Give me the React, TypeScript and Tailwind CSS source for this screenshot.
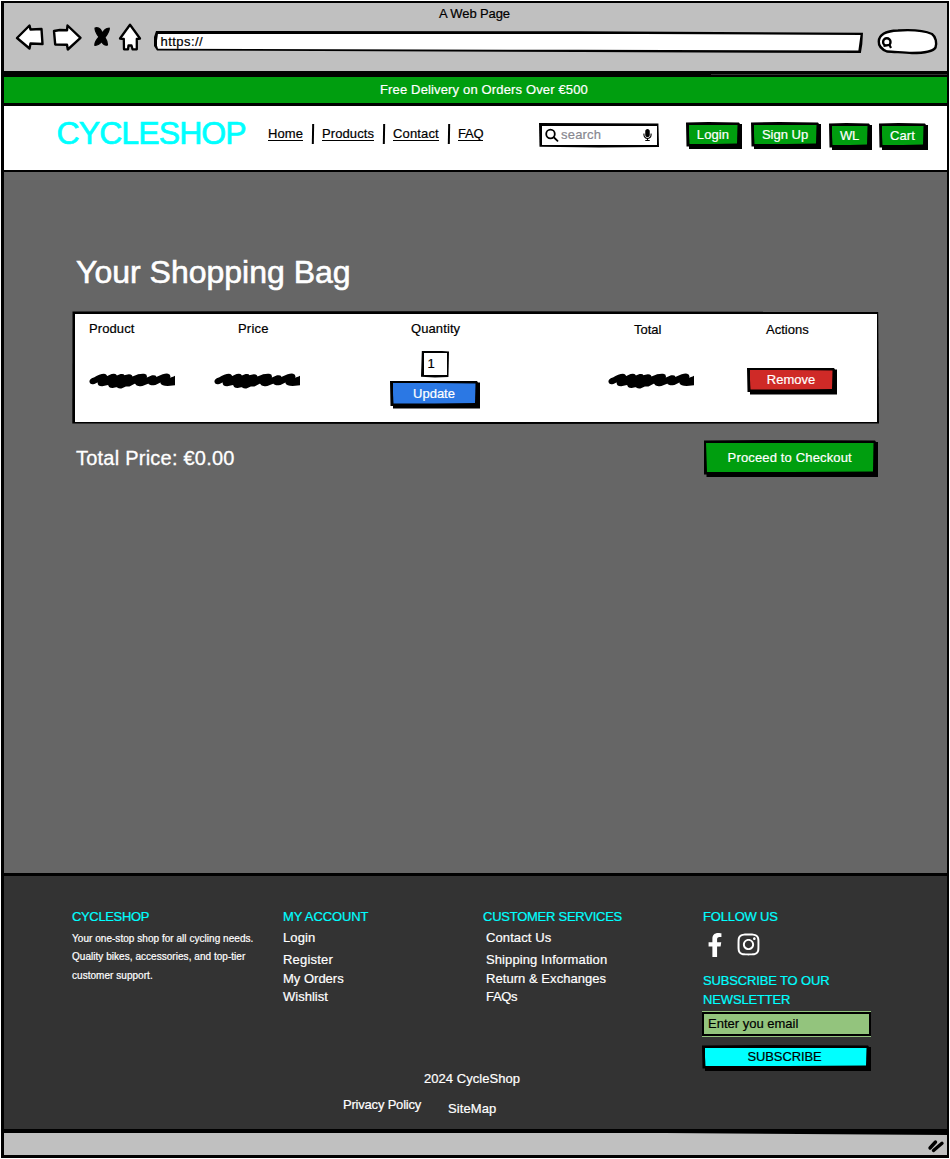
import React from 'react';
import { FaFacebookF, FaInstagram, FaMicrophone } from 'react-icons/fa';

type SketchButtonProps = {
  label: string;
  className: string;
  face: string;
  text?: string;
};

function SketchButton({ label, className, face, text = 'text-white' }: SketchButtonProps) {
  return (
    <button
      className={`shrink-0 bg-black pt-[2.5px] pr-[4.5px] pb-[5px] pl-[2.5px] [clip-path:polygon(0_0.5px,40%_0,calc(100%-3px)_0.5px,calc(100%-2px)_2px,100%_2px,100%_100%,3px_100%,3px_calc(100%-2.5px),0.5px_calc(100%-2.5px))] ${className}`}
    >
      <span
        className={`flex h-full w-full items-center justify-center whitespace-nowrap [clip-path:polygon(0_0,50%_0,100%_0.5px,calc(100%-0.5px)_calc(100%-0.5px),50%_100%,1px_100%)] ${face} ${text}`}
      >
        {label}
      </span>
    </button>
  );
}

function Scribble() {
  return (
    <svg className="block h-[18px] w-[86px]" viewBox="89 371 86 18" fill="#000" stroke="#000" strokeWidth="2" strokeLinejoin="round">
      <path d="M90.5 382 Q90 380 94 378.5 Q100 375 104 374.8 Q107 375 105.5 378 L112 375 Q116 374 116 377 L121 375 Q124 374.5 123 376.5 L129 375.2 Q132 375.2 131.5 378 L138 375.3 Q146 373.8 146 376.5 L145 379.5 L152 376.3 Q156 375.5 155.5 378.5 L163 375.2 Q169.5 373.5 169.5 376.8 L167.5 380 L173 377.8 L178 375.5 L178 384 L170 384.8 Q162.5 385.3 161.5 383 L162 380.5 L155 384 Q149.5 385 149 382.2 L142 385 Q137 386 136 383.5 L136.5 381.5 L129 385.5 L126 385.3 L121 387.5 Q118.5 388 117 386 L112.5 387 Q109 387 109 383.8 L102 385.3 Q98 385.3 98.8 382 L99.5 380.3 L94 383 Q91 383.8 90.5 382 Z" />
    </svg>
  );
}

function Divider() {
  return <span className="h-5 w-[2px] shrink-0 -skew-x-1 bg-black" />;
}

function BrowserBar() {
  return (
    <div className="h-[68px] bg-[#c0c0c0]">
      <div className="pt-px pr-[2px] text-center leading-[19px] tracking-[-0.1px]">A Web Page</div>
      <div className="flex items-start">
        <svg className="ml-[10px] h-[31px] w-8 shrink-0" viewBox="14 23 32 31" fill="#fff" stroke="#000" strokeWidth="2.4" strokeLinejoin="round">
          <path d="M17 38 L29.5 25.5 L30.5 29.5 L41.5 29 L42.5 44 L30.5 43.5 L29.5 48.5 Z" />
        </svg>
        <svg className="ml-[5px] h-[31px] w-8 shrink-0" viewBox="51 23 32 31" fill="#fff" stroke="#000" strokeWidth="2.4" strokeLinejoin="round">
          <path d="M54 31 L60 30 L67 30.3 L67.5 25.5 L80.5 37.8 L67.8 49.5 L67 44.8 L55.2 44.5 Z" />
        </svg>
        <svg className="ml-[9px] h-[31px] w-5 shrink-0" viewBox="92 23 20 31" fill="#000" stroke="#000" strokeWidth="1.2" strokeLinejoin="round">
          <path d="M95 28 Q98 27 100.5 29.5 L102.5 33 Q104.5 28.5 109.3 28 Q109.5 31.5 105 37.5 Q107.5 41 107.5 45 Q104 46 101.5 41.5 Q99 45.5 94.8 45.3 Q94.5 42 99 37 Q95 32 95 28 Z" />
        </svg>
        <svg className="ml-[5px] h-[31px] w-[26px] shrink-0" viewBox="117 23 26 31" fill="#fff" stroke="#000" strokeWidth="2.3" strokeLinejoin="round">
          <path d="M130 24.8 L140 38.5 L136.8 39 L136.8 49.3 L132.5 49.3 L131.5 45.5 L128.5 45.5 L128 49.3 L124 49.3 L123.8 39 L120 38.5 Z" />
        </svg>
        <div className="mt-2 ml-[11px] h-[22px] w-[709px] shrink-0 bg-black pt-[2.5px] pr-[2.5px] pb-[2px] pl-[2.5px] [clip-path:polygon(2px_0,60%_0.3px,100%_1.8px,99.9%_60%,99.7%_100%,60%_21px,3px_19.5px,0_15px,0_6px)]">
          <div className="h-full bg-white pl-[4px] text-[13px] leading-[15px] tracking-[0.45px] [clip-path:polygon(1.5px_0,60%_0.3px,100%_1.5px,99.7%_calc(100%-0.5px),60%_calc(100%-1.2px),1.5px_calc(100%-2.2px),0_60%)]">
            https://
          </div>
        </div>
        <svg className="mt-[4px] ml-[13px] h-[28px] w-[64px] shrink-0" viewBox="876 27 64 28" fill="#fff" stroke="#000" strokeWidth="2.4">
          <path d="M878.8 41.5 C879 34 886 31 898 30.5 C912 29.6 924 30.5 932 34 C936 37 937 43 935.5 47.5 C933 51.5 922 53 912 53 C903 53 894 51.5 887 51.5 C881 49 878.5 46 878.8 41.5 Z" />
          <circle cx="886.8" cy="41.9" r="3.7" strokeWidth="2.4" />
          <path d="M883.5 46 L889.5 45 L891 47.9" strokeWidth="2.2" />
        </svg>
      </div>
    </div>
  );
}

function SiteHeader() {
  return (
    <header className="flex h-16 items-start bg-white">
      <div className="mt-[9px] ml-[52.5px] w-[189.5px] shrink-0 text-[32px] leading-9 tracking-[-0.9px] text-[#00ffff] [-webkit-text-stroke:0.7px_#00ffff]">CYCLESHOP</div>
      <nav className="mt-[18px] ml-[22px] flex shrink-0 items-start leading-[19px]">
        <a className="h-[17px] w-[35px] border-b border-black tracking-[0.1px]">Home</a>
        <span className="w-[9px]" />
        <Divider />
        <a className="ml-2 h-[17px] w-[52px] border-b border-black tracking-[0.1px]">Products</a>
        <span className="w-[9px]" />
        <Divider />
        <a className="ml-2 h-[17px] w-[46px] border-b border-black tracking-[0.15px]">Contact</a>
        <span className="w-[9px]" />
        <Divider />
        <a className="ml-2 h-[17px] w-[25px] border-b border-black tracking-[-0.2px]">FAQ</a>
      </nav>
      <div className="mt-[17px] ml-[56px] h-[24.5px] w-[120px] shrink-0 bg-black p-[2.5px] [clip-path:polygon(0_0,50%_0.3px,99.5%_0.6px,100%_98%,50%_100%,0.5px_97%)]">
        <div className="flex h-full items-center bg-white px-[3.5px] pb-px">
          <svg className="h-[14px] w-[14px] shrink-0" viewBox="0 0 14 14" fill="none" stroke="#000" strokeWidth="1.8" strokeLinecap="round">
            <circle cx="5.5" cy="6" r="4.3" />
            <path d="M9 9.5 L12.5 12.8" />
          </svg>
          <span className="ml-[2px] grow tracking-[0.2px] text-[#888890]">search</span>
          <FaMicrophone className="mr-[1.5px] h-[12px] w-[9px]" />
        </div>
      </div>
      <SketchButton label="Login" face="bg-[#009e0f]" className="mt-4 ml-[27px] h-[27px] w-[56px] tracking-[0.1px]" />
      <SketchButton label="Sign Up" face="bg-[#009e0f]" className="mt-4 ml-[9px] h-[27px] w-[70px]" />
      <SketchButton label="WL" face="bg-[#009e0f]" className="mt-[17px] ml-2 h-[27px] w-[43px] tracking-[-0.2px]" />
      <SketchButton label="Cart" face="bg-[#009e0f]" className="mt-[17px] ml-[7px] h-[27px] w-[49px] tracking-[0.1px]" />
    </header>
  );
}

function Bag() {
  return (
    <main className="h-[701px] bg-[#666666] pl-[68px]">
      <h1 className="ml-[4px] pt-[81px] text-[32px] leading-[38px] text-white [-webkit-text-stroke:0.6px_#fff]">Your Shopping Bag</h1>
      <div className="mt-[20px] h-[113px] w-[807px] bg-black p-[2.5px] [clip-path:polygon(0.5px_0.5px,50%_0.2px,99.9%_0.8px,100%_99.5%,50%_100%,0.3px_99.5%)]">
        <div className="grid h-full grid-cols-[125px_176px_218px_139px_1fr] items-start bg-white pl-[14.5px] leading-[19px]">
          <div>
            <div className="mt-[5px] tracking-[0.1px]">Product</div>
            <div className="mt-[33px]"><Scribble /></div>
          </div>
          <div>
            <div className="mt-[5px] ml-[24px] tracking-[0.2px]">Price</div>
            <div className="mt-[33px]"><Scribble /></div>
          </div>
          <div>
            <div className="mt-[5px] ml-[21px] tracking-[0.1px]">Quantity</div>
            <div className="mt-[13px] ml-[31px] h-[27px] w-[28px] bg-black p-[2.5px] [clip-path:polygon(3%_0.6px,50%_0,100%_1px,98%_98%,50%_100%,0_97%)]">
              <div className="h-full bg-white pl-[4px] leading-[22px]">1</div>
            </div>
            <SketchButton label="Update" face="bg-[#2b78e4]" className="mt-[3px] block h-[28px] w-[90px]" />
          </div>
          <div>
            <div className="mt-[6px] ml-[26px]">Total</div>
            <div className="mt-[32px]"><Scribble /></div>
          </div>
          <div>
            <div className="mt-[6px] ml-[19px]">Actions</div>
            <SketchButton label="Remove" face="bg-[#cf2a27]" className="mt-[29px] block h-[27px] w-[90px]" />
          </div>
        </div>
      </div>
      <div className="flex items-start pt-4">
        <div className="mt-[6px] ml-[4px] w-[627.5px] text-[20px] leading-6 tracking-[0.23px] text-white [-webkit-text-stroke:0.3px_#fff]">Total Price: €0.00</div>
        <SketchButton label="Proceed to Checkout" face="bg-[#009e0f]" className="h-[37px] w-[174.5px] tracking-[0.15px]" />
      </div>
    </main>
  );
}

function Footer() {
  return (
    <footer className="h-[253px] bg-[#333333] pt-[31px] pl-[68px] leading-[19px] text-white">
      <div className="grid h-[162px] grid-cols-[211px_200px_220px_1fr]">
        <div>
          <div className="tracking-[-0.35px] text-[#00ffff]">CYCLESHOP</div>
          <div className="mt-[4px] text-[10px] tracking-[0.04px] whitespace-nowrap">
            <div className="leading-[18px]">Your one-stop shop for all cycling needs.</div>
            <div className="leading-[18px]">Quality bikes, accessories, and top-tier</div>
            <div className="mt-px leading-[18px]">customer support.</div>
          </div>
        </div>
        <div>
          <div className="tracking-[-0.1px] text-[#00ffff]">MY ACCOUNT</div>
          <div className="mt-[2px] tracking-[0.1px]">Login</div>
          <div className="mt-[3px] tracking-[0.2px]">Register</div>
          <div>My Orders</div>
          <div className="-mt-px">Wishlist</div>
        </div>
        <div>
          <div className="tracking-[-0.25px] text-[#00ffff]">CUSTOMER SERVICES</div>
          <div className="mt-[2px] ml-[3px] tracking-[0.1px]">Contact Us</div>
          <div className="mt-[3px] ml-[3px] tracking-[0.1px]">Shipping Information</div>
          <div className="ml-[3px] tracking-[0.05px]">Return &amp; Exchanges</div>
          <div className="-mt-px ml-[3px] tracking-[-0.3px]">FAQs</div>
        </div>
        <div>
          <div className="tracking-[-0.2px] text-[#00ffff]">FOLLOW US</div>
          <div className="mt-[6px] ml-[4px] flex items-center">
            <FaFacebookF className="h-6 w-4" />
            <FaInstagram className="ml-[12.5px] h-[25px] w-[25px]" />
          </div>
          <div className="mt-[14px] tracking-[-0.15px] text-[#00ffff]">
            SUBSCRIBE TO OUR
            <br />
            NEWSLETTER
          </div>
          <div className="mt-[2px] -ml-px h-[26px] w-[169px] bg-[#93c47d] py-px">
            <div className="h-6 bg-black p-[2px]">
              <div className="h-full bg-[#93c47d] pl-[4px] leading-[19px] text-black">Enter you email</div>
            </div>
          </div>
          <SketchButton label="SUBSCRIBE" face="bg-[#00ffff]" text="text-black pr-[2px]" className="mt-2 -ml-px block h-[26px] w-[169px] tracking-[-0.1px]" />
        </div>
      </div>
      <div className="ml-[352px] w-[120px] tracking-[0.05px]">2024 CycleShop</div>
      <div className="mt-[7px] ml-[271px] flex items-start">
        <div className="w-[105px] tracking-[-0.2px]">Privacy Policy</div>
        <div className="mt-[4px] tracking-[0.1px]">SiteMap</div>
      </div>
    </footer>
  );
}

export default function App() {
  return (
    <div className="h-[1159px] w-[950px] bg-white pt-px pl-px font-['Liberation_Sans',Arial,sans-serif] text-[13px] text-black [-webkit-text-stroke:0.2px_currentColor]">
      <div className="h-[1157px] w-[948px] border-t-2 border-r-2 border-b-[3px] border-l-[3px] border-black bg-black">
        <BrowserBar />
        <div className="h-[6px] bg-black pt-[3px]">
          <div className="ml-auto h-px w-1/4 bg-[#333]" />
        </div>
        <div className="h-[26px] bg-[#009e0f] pt-[3px] pl-[376px] leading-[19px] tracking-[0.15px] text-white">
          Free Delivery on Orders Over €500
        </div>
        <div className="h-[3px] bg-black" />
        <SiteHeader />
        <div className="h-[2px] bg-black" />
        <Bag />
        <div className="h-[3px] bg-black" />
        <Footer />
        <div className="h-[4px] bg-black" />
        <div className="flex h-[22px] justify-end bg-[#c0c0c0] [clip-path:polygon(0_0,70%_0,100%_2px,100%_100%,0_100%)]">
          <svg className="mt-[5px] mr-[2px] h-4 w-[18px]" viewBox="927 1138 18 16" stroke="#000" strokeWidth="3.4" strokeLinecap="round">
            <path d="M930 1148 L935.5 1142 M933.5 1150.5 L942 1143.3" />
          </svg>
        </div>
      </div>
    </div>
  );
}
